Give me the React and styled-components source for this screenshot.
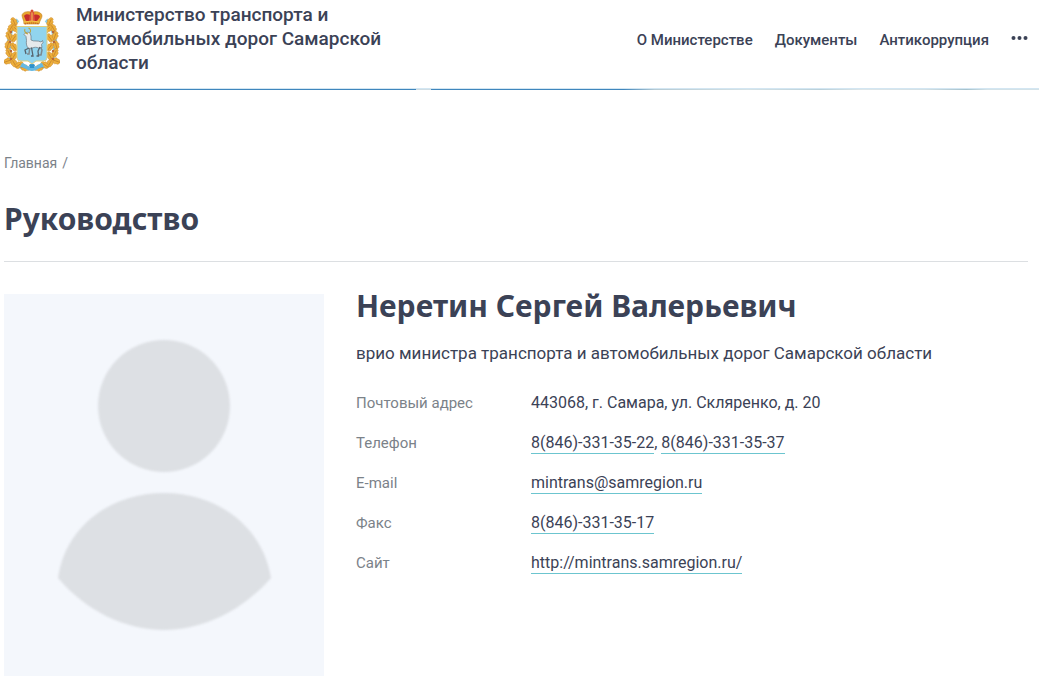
import React from "react";
import styled, { createGlobalStyle } from "styled-components";

const GlobalStyle = createGlobalStyle`
  :root {
    --text: #3b4256;
    --muted: #7b8289;
    --accent: #6cc5cf;
    --line: #dcdfe2;
    --photo: #f4f7fc;
    --figure: #dde0e4;
  }
  * {
    box-sizing: border-box;
  }
  body {
    margin: 0;
    background-color: #fff;
    color: var(--text);
    font-family: Roboto, "Liberation Sans", sans-serif;
    font-size: 16px;
    line-height: 24px;
  }
`;

const Header = styled.header`
  display: flex;
  align-items: flex-start;
  justify-content: space-between;
  padding: 3px 11px 13px 4px;
`;

const Brand = styled.a`
  display: flex;
  gap: 16px;
  color: inherit;
  text-decoration: none;
`;

const BrandName = styled.span`
  max-width: 320px;
  font-size: 19px;
  font-weight: 500;
  line-height: 24px;
`;

const Crest = styled.svg`
  flex: none;
  width: 56px;
  height: 64px;
  margin-top: 6px;
`;

const Menu = styled.nav`
  display: flex;
  align-items: center;
  gap: 22px;
  padding-top: 25px;
`;

const MenuLink = styled.a`
  color: inherit;
  font-size: 15px;
  font-weight: 500;
  text-decoration: none;
`;

const MoreButton = styled.button`
  display: flex;
  padding: 0 0 4px;
  border: 0;
  background: none;
  color: inherit;
`;

const Stripe = styled.div`
  height: 2px;
  border-top: 1px solid #d3e6f2;
  background: linear-gradient(
    90deg,
    #3f86bd 0 40%,
    #cfdde4 40% 41.5%,
    #3f86bd 41.5% 60%,
    #b5cad4 63%,
    #d5e2e6 72%,
    #b9d0da 79%,
    #dde6e9 83%,
    #d3e0e5 89%,
    #a5c2ce 93%,
    #d3e2e8 95%
  );
`;

const Page = styled.main`
  padding: 61px 11px 20px 4px;
`;

const Breadcrumbs = styled.nav`
  display: flex;
  gap: 5px;
  color: var(--muted);
  font-size: 14px;
`;

const Crumb = styled.a`
  color: inherit;
  text-decoration: none;
`;

const Title = styled.h1`
  margin: 0;
  font-family: "Noto Sans", "Open Sans", sans-serif;
  font-size: 30px;
  font-weight: 700;
  line-height: 40px;
`;

const PageTitle = styled(Title)`
  padding: 24px 0 22px;
  border-bottom: 1px solid var(--line);
`;

const Person = styled.article`
  display: flex;
  align-items: flex-start;
  gap: 32px;
  padding-top: 32px;
`;

const Photo = styled.svg`
  flex: none;
  width: 320px;
  height: 382px;
  background-color: var(--photo);
`;

// the placeholder figure has soft edges
const Figure = styled.g`
  fill: var(--figure);
  filter: blur(1px);
`;

const Info = styled.div`
  flex: 1;
  margin-top: -8px;
`;

const Position = styled.p`
  margin: 15px 0 26px;
  font-size: 17px;
`;

const Contacts = styled.dl`
  display: grid;
  grid-template-columns: 175px 1fr;
  row-gap: 16px;
  margin: 0;
`;

const Label = styled.dt`
  color: var(--muted);
  font-size: 15px;
`;

const Value = styled.dd`
  margin: 0;
`;

const ContactLink = styled.a`
  padding-bottom: 1px;
  border-bottom: 1px solid var(--accent);
  color: inherit;
  text-decoration: none;
`;

const menu = ["О Министерстве", "Документы", "Антикоррупция"];

const contacts = [
  { label: "Почтовый адрес", text: "443068, г. Самара, ул. Скляренко, д. 20" },
  {
    label: "Телефон",
    links: [
      { text: "8(846)-331-35-22", href: "tel:88463313522" },
      { text: "8(846)-331-35-37", href: "tel:88463313537" }
    ]
  },
  {
    label: "E-mail",
    links: [
      { text: "mintrans@samregion.ru", href: "mailto:mintrans@samregion.ru" }
    ]
  },
  {
    label: "Факс",
    links: [{ text: "8(846)-331-35-17", href: "tel:88463313517" }]
  },
  {
    label: "Сайт",
    links: [
      {
        text: "http://mintrans.samregion.ru/",
        href: "http://mintrans.samregion.ru/"
      }
    ]
  }
];

// left half of the oak wreath, the right one is mirrored
const leaves = [
  [10, 13, -25],
  [7, 19, 30],
  [12, 20, -50],
  [5, 27, -20],
  [10, 29, 35],
  [4, 36, 15],
  [10, 38, -35],
  [5, 44, -25],
  [10, 47, 30],
  [4, 52, 70],
  [10, 54, -30],
  [15, 56, 55],
  [21, 59, 100]
];

const Wreath = () => (
  <g>
    <path
      d="M14 11C7 17 4 29 5 40s5 16 13 18"
      fill="none"
      stroke="#8fcfe9"
      strokeWidth="4"
    />
    {leaves.map(([x, y, turn]) => (
      <g key={`${x}-${y}`} transform={`translate(${x} ${y}) rotate(${turn})`}>
        <path
          d="M0-4.600C2-4.400 2.300-3 1.700-2.200 3.400-1.800 3.400.2 2.300.8 3.300 2.600 1.500 4 0 4.200-1.500 4-3.300 2.600-2.300.8-3.400.2-3.400-1.800-1.700-2.200-2.300-3-2-4.400 0-4.600Z"
          fill="#eeb03a"
          stroke="#cd8a2c"
          strokeWidth=".5"
        />
        <path d="M0-3V4" stroke="#b8752a" strokeWidth=".6" />
      </g>
    ))}
    <g fill="#b8673a">
      <circle cx="7" cy="23" r="1.200" />
      <circle cx="6" cy="33" r="1.200" />
      <circle cx="7" cy="42" r="1.200" />
      <circle cx="7" cy="50" r="1.200" />
    </g>
  </g>
);

const CrestIcon = () => (
  <Crest viewBox="0 0 56 64" role="img" aria-label="Герб Самарской области">
    <Wreath />
    <g transform="translate(56 0) scale(-1 1)">
      <Wreath />
    </g>
    <path
      d="M18 54c3 0 5 4 10 4s7-4 10-4l2 4c-5 0-7 4-12 4s-7-4-12-4Z"
      fill="#65b9e2"
    />
    <path d="m25 56 3-2 3 2-1 3h-4Z" fill="#2d91cb" />
    <path
      d="M13 17.500h30V49q0 3-4 3h-7l-4 3-4-3h-7q-4 0-4-3Z"
      fill="#91d4ee"
      stroke="#e1cf7d"
      strokeWidth="1"
    />
    {/* goat: far legs, body with neck and head, near legs, horns */}
    <path
      d="M26 36 25 45h-2M36 37l2 4-1 5h-2"
      fill="none"
      stroke="#7d8990"
      strokeWidth="1.500"
    />
    <path
      d="M20 25.500c1-2 4-3 6-1.500l1 3v4c3 2 7 0 10 2l1.500-1.500.5 2-1.500 2 .5 3-3.500.5c-2-1-4-1-6 0l-4 .5c-2-2-2.500-5-2-8l-.5-4Z"
      fill="#e6eaec"
      stroke="#6b7780"
      strokeWidth=".7"
    />
    <path
      d="M25 39l-4 2 1 4M27.500 38.500 29 47h-2M36 38l-2 4 .5 5h-2"
      fill="none"
      stroke="#56636d"
      strokeWidth="1.300"
    />
    <path
      d="M24 25c-3-1-4-3-3-5M25.500 24c2-2 1-4-1-5"
      fill="none"
      stroke="#bba443"
      strokeWidth="1.100"
    />
    <path
      d="M18 6c1-3 5-4 9-3h2c5-1 9 1 9 4 0 2-2 4-3 8H20c0-4-2-6-2-9Z"
      fill="#e7a52e"
      stroke="#c5801e"
      strokeWidth=".6"
    />
    <path
      d="M20 7c1-2 4-2 6-1l1 6h-5ZM30 6c3-1 6 0 6 2l-3 4h-4Z"
      fill="#c52d2c"
    />
    <path d="M26 3h4l1 9h-6Z" fill="#db5140" />
    <path d="M28 1v11M20 13q8-2 15 0" stroke="#f3c450" fill="none" />
    <circle cx="28" cy="2" r="1.500" fill="#d94d32" />
    <path
      d="M21 15q7-2 14 0"
      stroke="#bc4d2a"
      strokeWidth="1"
      strokeDasharray="1 1"
      fill="none"
    />
  </Crest>
);

const App = () => (
  <>
    <GlobalStyle />
    <Header>
      <Brand href="#">
        <CrestIcon />
        <BrandName>
          Министерство транспорта и автомобильных дорог Самарской области
        </BrandName>
      </Brand>
      <Menu aria-label="Главное меню">
        {menu.map(item => (
          <MenuLink href="#" key={item}>
            {item}
          </MenuLink>
        ))}
        <MoreButton type="button" aria-label="Ещё">
          <svg width="17" height="6" viewBox="0 0 17 6" fill="currentColor">
            <circle cx="2.500" cy="3" r="2" />
            <circle cx="8.500" cy="3" r="2" />
            <circle cx="14.500" cy="3" r="2" />
          </svg>
        </MoreButton>
      </Menu>
    </Header>
    <Stripe />
    <Page>
      <Breadcrumbs aria-label="Навигация">
        <Crumb href="#">Главная</Crumb>
        <span>/</span>
      </Breadcrumbs>
      <PageTitle>Руководство</PageTitle>
      <Person>
        <Photo viewBox="0 0 320 382" aria-hidden="true">
          <Figure>
            <circle cx="160" cy="112" r="66" />
            <path d="M54 284C61 233 106 199 160 199S259 233 267 284C238 317 199 336 160 336S82 317 54 284Z" />
          </Figure>
        </Photo>
        <Info>
          <Title as="h2">Неретин Сергей Валерьевич</Title>
          <Position>
            врио министра транспорта и автомобильных дорог Самарской области
          </Position>
          <Contacts>
            {contacts.map(({ label, text, links = [] }) => (
              <React.Fragment key={label}>
                <Label>{label}</Label>
                <Value>
                  {text}
                  {links.map((link, i) => (
                    <React.Fragment key={link.href}>
                      {i > 0 ? ", " : null}
                      <ContactLink href={link.href}>{link.text}</ContactLink>
                    </React.Fragment>
                  ))}
                </Value>
              </React.Fragment>
            ))}
          </Contacts>
        </Info>
      </Person>
    </Page>
  </>
);

export default App;
